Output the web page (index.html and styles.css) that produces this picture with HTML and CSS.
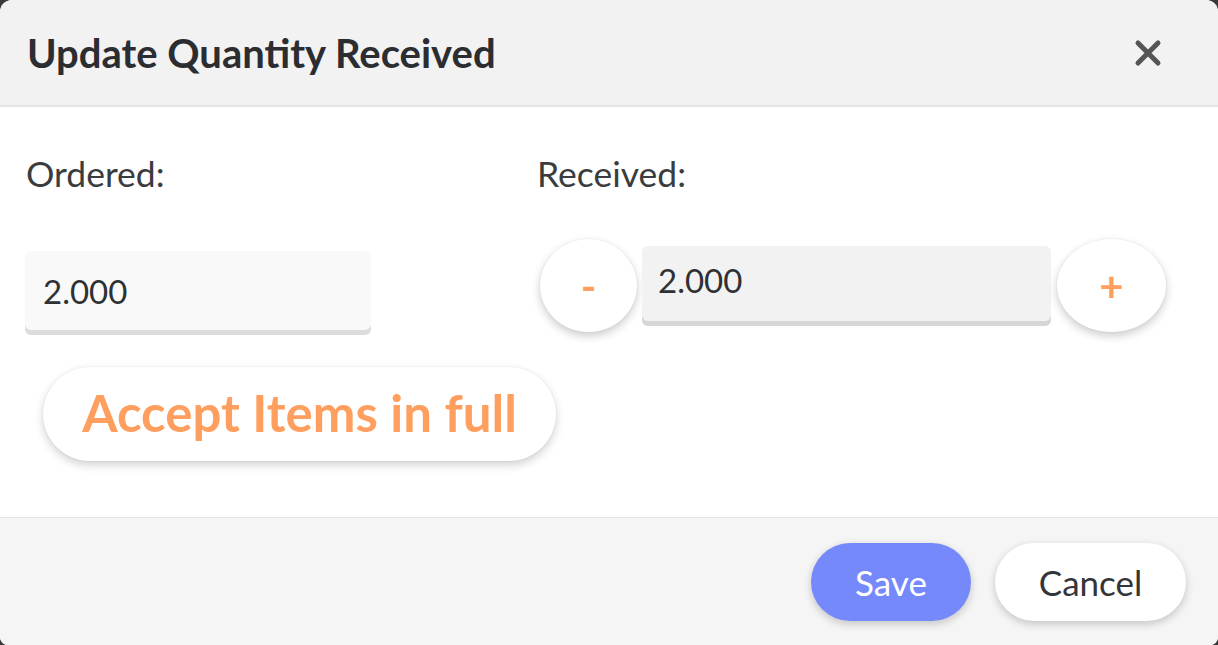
FILE: index.html
```html
<!DOCTYPE html>
<html>
<head>
<meta charset="utf-8">
<link rel="stylesheet" href="styles.css">
</head>
<body>
<div class="modal">
  <div class="modal-header">
    <h1 class="title">Update Quantity Received</h1>
    <button class="close" aria-label="Close">
      <svg width="28" height="28" viewBox="0 0 28 28"><path d="M4 4 L24 24 M24 4 L4 24" stroke="#555" stroke-width="5" stroke-linecap="round"/></svg>
    </button>
  </div>
  <div class="modal-body">
    <div class="col col-left">
      <div class="label">Ordered:</div>
      <div class="field field-ordered">2.000</div>
      <button class="accept">Accept Items in full</button>
    </div>
    <div class="col col-right">
      <div class="label">Received:</div>
      <div class="stepper">
        <button class="round minus">-</button>
        <div class="field field-received">2.000</div>
        <button class="round plus">+</button>
      </div>
    </div>
  </div>
  <div class="modal-footer">
    <button class="btn btn-save">Save</button>
    <button class="btn btn-cancel">Cancel</button>
  </div>
</div>
</body>
</html>
```

FILE: styles.css
```css
* { box-sizing: border-box; }
html, body { margin: 0; padding: 0; }
body {
  background: #3a3a3a;
  font-family: Lato, "Open Sans", sans-serif;
  width: 1218px;
  height: 645px;
  overflow: hidden;
}
.modal {
  width: 1218px;
  height: 645px;
  background: #ffffff;
  border-radius: 12px 12px 8px 8px;
  overflow: hidden;
  display: flex;
  flex-direction: column;
}
.modal-header {
  height: 107px;
  background: #f2f2f2;
  border-bottom: 2px solid #e4e4e4;
  display: flex;
  align-items: center;
  justify-content: space-between;
  padding: 0 56px 0 27px;
}
.title {
  margin: 0;
  font-size: 40px;
  font-weight: 700;
  color: #2b2d31;
}
.close {
  border: 0;
  background: transparent;
  padding: 0;
  width: 28px;
  height: 28px;
  display: flex;
}
.modal-body {
  flex: 1;
  display: flex;
  padding: 0 0 0 25px;
}
.col { display: flex; flex-direction: column; }
.col-left { width: 511px; }
.label {
  font-size: 35.5px;
  color: #3a3c40;
  margin-top: 45px;
  padding-left: 1px;
  height: 99px;
}
.field {
  border-radius: 6px;
  font-size: 33px;
  color: #2e3034;
}
.field-ordered {
  width: 346px;
  height: 84px;
  background: #f9f9f9;
  box-shadow: inset 0 -5px 0 #dcdcdc;
  padding: 20px 0 0 18px;
}
.accept {
  margin-top: 32px;
  margin-left: 18px;
  width: 513px;
  height: 94px;
  border: 0;
  border-radius: 47px;
  background: #fff;
  box-shadow: 0 4px 10px rgba(0,0,0,0.18), 0 0 2px rgba(0,0,0,0.08);
  color: #ff9f5f;
  font-family: Lato, sans-serif;
  font-weight: 700;
  font-size: 51px;
  padding: 0 0 4px 0;
}
.stepper {
  display: flex;
  align-items: center;
  margin-left: 4px;
  margin-top: -12px;
}
.round {
  border: 0;
  background: #fff;
  border-radius: 50%;
  height: 93px;
  box-shadow: 0 4px 10px rgba(0,0,0,0.2), 0 0 2px rgba(0,0,0,0.08);
  color: #ff9f5f;
  font-family: Lato, sans-serif;
  font-weight: 700;
  font-size: 42px;
  padding: 0;
}
.minus { width: 97px; }
.plus { width: 109px; margin-left: 6px; }
.field-received {
  margin-left: 5px;
  width: 409px;
  height: 80px;
  background: #f2f2f2;
  box-shadow: inset 0 -5px 0 #d6d6d6;
  padding: 14px 0 0 16px;
}
.modal-footer {
  height: 128px;
  background: #f5f5f5;
  border-top: 1px solid #e2e2e2;
  display: flex;
  justify-content: flex-end;
  align-items: flex-start;
  padding: 25px 32px 0 0;
  gap: 24px;
}
.btn {
  height: 78px;
  border: 0;
  border-radius: 39px;
  font-family: Lato, sans-serif;
  font-size: 35px;
}
.btn-save {
  width: 160px;
  background: #7589fb;
  color: #fff;
  box-shadow: 0 3px 8px rgba(0,0,0,0.2);
}
.btn-cancel {
  width: 191px;
  background: #fff;
  color: #333539;
  box-shadow: 0 3px 8px rgba(0,0,0,0.2);
}
```
